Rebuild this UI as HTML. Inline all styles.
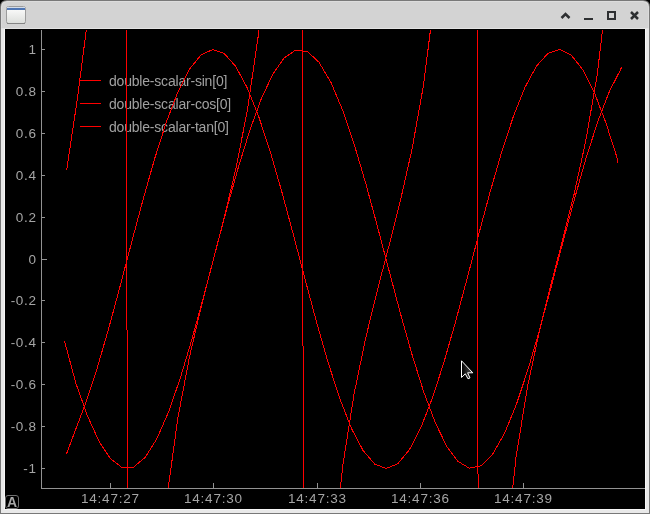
<!DOCTYPE html>
<html><head><meta charset="utf-8"><style>
html,body{margin:0;padding:0;width:650px;height:514px;overflow:hidden;background:#000;}
body{position:relative;font-family:"Liberation Sans",sans-serif;}
.t{position:absolute;left:0;top:0;width:650px;height:514px;will-change:transform;}
.yl{position:absolute;left:0;width:36.7px;text-align:right;font-size:13.5px;line-height:16px;color:#a5a5a5;letter-spacing:0.7px;}
.xl{position:absolute;top:491px;width:100px;text-align:center;font-size:13.5px;line-height:16px;color:#a5a5a5;letter-spacing:0.8px;}
.lg{position:absolute;left:109px;font-size:14px;line-height:16px;color:#a0a0a0;letter-spacing:-0.2px;}
svg{position:absolute;left:0;top:0;}
</style></head><body>
<svg width="650" height="514" viewBox="0 0 650 514">
<defs>
<linearGradient id="ig" x1="0" y1="0" x2="0" y2="1"><stop offset="0" stop-color="#ffffff"/><stop offset="1" stop-color="#dcdedb"/></linearGradient>
</defs>
<!-- frame -->
<path d="M0,514 V7 Q0,0 7,0 H643 Q650,0 650,7 V514 Z" fill="#787878"/>
<path d="M1,513 V7 Q1,1 7,1 H643 Q649,1 649,7 V513 Z" fill="#dcdcdc"/>
<path d="M2,513 V8 Q2,2 8,2 H642 Q648,2 648,8 V513 Z" fill="#d3d3d3"/>
<rect x="1" y="28" width="648" height="485" fill="#e9e9e9"/>
<rect x="1" y="28" width="648" height="1" fill="#e3e3e3"/>
<rect x="4" y="29" width="642" height="481" fill="#f6f6f6"/>
<rect x="5" y="29" width="640" height="480" fill="#000"/>
</svg>
<svg width="650" height="514" viewBox="0 0 650 514">
<!-- window icon -->
<rect x="6.5" y="6.5" width="19" height="17" rx="2" fill="url(#ig)" stroke="#9c9c9c"/>
<rect x="7" y="23" width="18" height="1" fill="#858585"/>
<rect x="7" y="7" width="18" height="1" fill="#d3dce8"/>
<rect x="7" y="8" width="18" height="2" fill="#4f76b4"/>
<!-- buttons -->
<path d="M561.5,18 L565.5,14 L569.5,18" fill="none" stroke="#2e3032" stroke-width="2.5"/>
<rect x="584" y="18" width="9" height="2" fill="#2e3032"/>
<rect x="608" y="12" width="7" height="7" fill="none" stroke="#2e3032" stroke-width="2"/>
<path d="M631,12 L638,19 M638,12 L631,19" fill="none" stroke="#2e3032" stroke-width="2.5"/>
<!-- axes -->
<rect x="41" y="30" width="1" height="459" fill="#929292"/>
<rect x="41" y="488" width="604" height="1" fill="#929292"/>
<rect x="42" y="49" width="3" height="1" fill="#929292"/><rect x="42" y="91" width="3" height="1" fill="#929292"/><rect x="42" y="133" width="3" height="1" fill="#929292"/><rect x="42" y="175" width="3" height="1" fill="#929292"/><rect x="42" y="217" width="3" height="1" fill="#929292"/><rect x="42" y="259" width="5" height="1" fill="#929292"/><rect x="42" y="300" width="3" height="1" fill="#929292"/><rect x="42" y="342" width="3" height="1" fill="#929292"/><rect x="42" y="384" width="3" height="1" fill="#929292"/><rect x="42" y="426" width="3" height="1" fill="#929292"/><rect x="42" y="468" width="3" height="1" fill="#929292"/><rect x="110" y="483" width="1" height="5" fill="#929292"/><rect x="213" y="483" width="1" height="5" fill="#929292"/><rect x="317" y="483" width="1" height="5" fill="#929292"/><rect x="420" y="483" width="1" height="5" fill="#929292"/><rect x="523" y="483" width="1" height="5" fill="#929292"/>
<!-- A icon -->
<rect x="5.5" y="495.5" width="13" height="13" rx="2.5" fill="none" stroke="#707070"/>
</svg>
<div class="t">
<div class="yl" style="top:42px">1</div><div class="yl" style="top:84px">0.8</div><div class="yl" style="top:126px">0.6</div><div class="yl" style="top:168px">0.4</div><div class="yl" style="top:210px">0.2</div><div class="yl" style="top:252px">0</div><div class="yl" style="top:293px">-0.2</div><div class="yl" style="top:335px">-0.4</div><div class="yl" style="top:377px">-0.6</div><div class="yl" style="top:419px">-0.8</div><div class="yl" style="top:461px">-1</div>
<div class="xl" style="left:60.4px">14:47:27</div><div class="xl" style="left:163.4px">14:47:30</div><div class="xl" style="left:267.4px">14:47:33</div><div class="xl" style="left:370.4px">14:47:36</div><div class="xl" style="left:473.4px">14:47:39</div>
<div class="lg" style="top:73px">double-scalar-sin[0]</div>
<div class="lg" style="top:96px">double-scalar-cos[0]</div>
<div class="lg" style="top:119px">double-scalar-tan[0]</div>
<div style="position:absolute;left:6px;top:495px;width:12px;text-align:center;font-size:14px;line-height:15px;color:#a8a8a8;font-weight:bold">A</div>
</div>
<svg width="650" height="514" viewBox="0 0 650 514" shape-rendering="crispEdges">
<defs><linearGradient id="cg" gradientUnits="userSpaceOnUse" x1="462" y1="368" x2="471" y2="368"><stop offset="0" stop-color="#000"/><stop offset="1" stop-color="#4a4a4a"/></linearGradient><clipPath id="pc"><rect x="42" y="30" width="603" height="458"/></clipPath></defs>
<g clip-path="url(#pc)" fill="none" stroke="#ff0000" stroke-width="1">
<rect x="80" y="80" width="21" height="1" fill="#ff0000" stroke="none"/>
<rect x="80" y="103" width="21" height="1" fill="#ff0000" stroke="none"/>
<rect x="80" y="126" width="21" height="1" fill="#ff0000" stroke="none"/>
<g transform="translate(0.5 0.5)">
<polyline points="64.00,340.40 75.20,382.26 86.80,414.95 98.40,440.69 110.00,458.33 121.60,467.08 133.20,466.56 144.80,456.78 156.40,438.19 168.00,411.61 179.60,378.22 191.20,339.51 202.80,297.19 214.40,253.16 226.00,209.36 237.60,167.75 249.20,130.17 260.80,98.30 272.40,73.55 283.65,57.40 295.25,49.56 306.85,51.00 318.45,61.68 330.40,81.82 342.00,109.35 353.60,143.52 365.20,182.80 376.80,225.44 388.40,269.56 400.00,313.18 411.60,354.38 423.20,391.30 434.80,422.33 446.40,446.07 457.30,460.79 468.90,467.72 480.50,465.35 492.10,453.78 504.40,432.04 516.00,403.57 527.60,368.65 539.20,328.84 550.80,285.89 562.40,241.73 574.00,198.31 585.60,157.57 597.20,121.32 608.80,91.17 620.40,68.45 620.80,66.90"/>
<polyline points="65.80,453.90 84.96,402.99 96.53,368.07 108.10,328.31 119.66,285.46 131.23,241.42 142.80,198.14 154.36,157.52 165.93,121.37 177.50,91.28 189.07,68.59 200.63,54.29 212.20,49.02 223.77,53.01 235.33,66.09 246.90,87.68 258.47,116.82 270.03,152.22 281.60,192.32 293.17,235.35 304.74,279.40 316.30,322.52 327.87,362.82 339.44,398.50 351.00,428.00 362.57,450.00 374.14,463.53 385.70,468.00 397.27,463.20 408.84,449.36 420.41,427.07 431.97,397.34 443.54,361.46 455.11,321.03 466.67,277.84 478.24,233.79 489.81,190.84 501.38,150.87 512.94,115.67 524.51,86.78 536.08,65.48 547.64,52.72 559.21,49.05 570.78,54.65 582.34,69.26 593.91,92.23 605.48,122.56 617.05,158.90 617.00,162.60"/>
<polyline points="66.10,169.90 76.70,99.50 85.80,29.50 87.80,14.50"/>
<polyline points="131.18,2851.31 142.74,957.27 154.31,640.22 165.88,500.96 177.44,416.95 189.01,356.33 200.58,306.72 212.15,261.76 223.71,217.10 235.28,168.50 246.85,110.06 258.41,30.76 269.98,-96.57 281.55,-368.66 293.12,-1608.72"/>
<polyline points="307.39,1578.59 318.96,801.78 330.53,579.17 342.09,466.34 353.66,393.01 365.23,337.38 376.79,290.04 388.36,245.66 399.93,200.10 411.50,148.76 423.06,84.47 434.63,-7.60 446.20,-168.33 457.76,-577.20 469.33,-5730.37"/>
<polyline points="481.00,1379.23 492.56,760.36 504.13,560.74 515.70,455.25 527.26,385.04 538.83,330.89 550.40,284.19 561.97,239.89 573.53,193.86 585.10,141.33 596.67,74.53 608.23,-23.15 619.80,-199.66 631.37,-686.26 642.94,-27459.82"/>
</g>
<rect x="126" y="30" width="1" height="300" fill="#ff0000" stroke="none"/>
<rect x="127" y="330" width="1" height="158" fill="#ff0000" stroke="none"/>
<rect x="302" y="30" width="1" height="316" fill="#ff0000" stroke="none"/>
<rect x="303" y="346" width="1" height="142" fill="#ff0000" stroke="none"/>
<rect x="477" y="30" width="1" height="444" fill="#ff0000" stroke="none"/>
<rect x="478" y="474" width="1" height="14" fill="#ff0000" stroke="none"/>
</g>
<path d="M461.5,360.8 V377.5 L465.3,373.8 L468,378.8 L470,377.9 L467.6,372.8 L472.8,372.8 Z" fill="url(#cg)" stroke="#ffffff" stroke-width="1" shape-rendering="auto"/>
</svg>
</body></html>
